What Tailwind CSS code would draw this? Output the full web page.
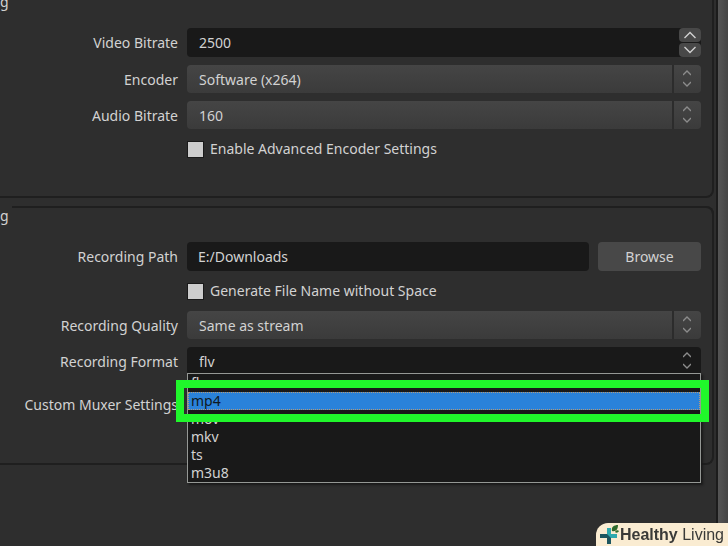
<!DOCTYPE html>
<html lang="en">
<head>
  <meta charset="UTF-8" />
  <meta name="viewport" content="width=device-width, initial-scale=1.0" />
  <title>Output Settings</title>
  <script src="https://cdn.jsdelivr.net/npm/@tailwindcss/browser@4"></script>
</head>
<body class="flex min-h-screen overflow-hidden bg-[#2e2e2e] font-['Noto_Sans',sans-serif] text-sm text-[#d2d2d2]">
  <main class="flex min-w-0 flex-1 flex-col gap-2 pr-[2px]">

    <!-- Streaming -->
    <section class="rounded-br-lg border-r-2 border-b-2 border-[#1f1f1f] pr-[11px] pb-[35px]">
      <h2 class="-mt-2 h-9 leading-5">g</h2>
      <form class="flex flex-col gap-2">
        <div class="flex h-[29px] items-center gap-[9px]">
          <label for="vbitrate" class="w-[178px] text-right">Video Bitrate</label>
          <div class="flex h-full flex-1 rounded bg-[#191919]">
            <input id="vbitrate" type="text" value="2500" class="min-w-0 flex-1 pl-3 outline-none">
            <div class="flex w-[22px] flex-col gap-px">
              <button type="button" aria-label="Increase" class="flex flex-1 items-center justify-center rounded bg-[#484848]">
                <svg class="h-2 w-3" viewBox="0 0 12 8" fill="none" stroke="#d0d0d0" stroke-width="1.4"><path d="M0.5 7l5.5-5.5 5.5 5.5" /></svg>
              </button>
              <button type="button" aria-label="Decrease" class="flex flex-1 items-center justify-center rounded bg-[#484848]">
                <svg class="h-2 w-3" viewBox="0 0 12 8" fill="none" stroke="#d0d0d0" stroke-width="1.4"><path d="M0.5 1l5.5 5.5 5.5-5.5" /></svg>
              </button>
            </div>
          </div>
        </div>
        <div class="flex h-7 items-center gap-[9px]">
          <label for="encoder" class="w-[178px] pt-px text-right">Encoder</label>
          <div class="relative h-full flex-1">
            <select id="encoder" class="h-full w-full appearance-none rounded bg-linear-to-b from-[#454545] to-[#3b3b3b] pt-px pl-3 outline-none"><option>Software (x264)</option></select>
            <span class="pointer-events-none absolute inset-y-0 right-0 flex w-[29px] items-center justify-center border-l-2 border-[#2c2c2c] pr-px">
              <svg class="h-[18px] w-2" viewBox="0 0 8 18" fill="none" stroke="#8c8c8c" stroke-width="1.3"><path d="M0 5l4-4 4 4M0 12l4 4 4-4" /></svg>
            </span>
          </div>
        </div>
        <div class="flex h-7 items-center gap-[9px]">
          <label for="abitrate" class="w-[178px] pt-px text-right">Audio Bitrate</label>
          <div class="relative h-full flex-1">
            <select id="abitrate" class="h-full w-full appearance-none rounded bg-linear-to-b from-[#454545] to-[#3b3b3b] pt-px pl-3 outline-none"><option>160</option></select>
            <span class="pointer-events-none absolute inset-y-0 right-0 flex w-[29px] items-center justify-center border-l-2 border-[#2c2c2c] pr-px">
              <svg class="h-[18px] w-2" viewBox="0 0 8 18" fill="none" stroke="#8c8c8c" stroke-width="1.3"><path d="M0 5l4-4 4 4M0 12l4 4 4-4" /></svg>
            </span>
          </div>
        </div>
        <div class="flex h-6 items-center gap-1.5 pl-[187px]">
          <input id="advanced" type="checkbox" class="size-[17px] appearance-none border border-[#1a1a1a] bg-[#cdcdcd]">
          <label for="advanced">Enable Advanced Encoder Settings</label>
        </div>
      </form>
    </section>

    <!-- Recording -->
    <section class="rounded-r-lg border-r-2 border-b-2 border-[#1f1f1f] pr-[11px] pb-10">
      <div class="-mr-[13px] flex h-9">
        <h2 class="w-3 leading-5">g</h2>
        <div class="h-3 flex-1 rounded-tr-lg border-t-2 border-r-2 border-[#1f1f1f]"></div>
      </div>
      <form class="flex flex-col gap-2">
        <div class="flex h-[29px] items-center gap-[9px]">
          <label for="path" class="w-[178px] text-right">Recording Path</label>
          <input id="path" type="text" value="E:/Downloads" class="h-full min-w-0 flex-1 rounded bg-[#191919] pl-[11px] outline-none">
          <button type="button" class="h-full w-[103px] rounded bg-[#484848]">Browse</button>
        </div>
        <div class="flex h-6 items-center gap-1.5 pl-[187px]">
          <input id="nospace" type="checkbox" class="size-[17px] appearance-none border border-[#1a1a1a] bg-[#cdcdcd]">
          <label for="nospace">Generate File Name without Space</label>
        </div>
        <div class="flex h-7 items-center gap-[9px]">
          <label for="quality" class="w-[178px] pt-px text-right">Recording Quality</label>
          <div class="relative h-full flex-1">
            <select id="quality" class="h-full w-full appearance-none rounded bg-linear-to-b from-[#454545] to-[#3b3b3b] pt-px pl-3 outline-none"><option>Same as stream</option></select>
            <span class="pointer-events-none absolute inset-y-0 right-0 flex w-[29px] items-center justify-center border-l-2 border-[#2c2c2c] pr-px">
              <svg class="h-[18px] w-2" viewBox="0 0 8 18" fill="none" stroke="#8c8c8c" stroke-width="1.3"><path d="M0 5l4-4 4 4M0 12l4 4 4-4" /></svg>
            </span>
          </div>
        </div>
        <div class="flex h-7 items-center gap-[9px]">
          <label for="format" class="w-[178px] pt-px text-right">Recording Format</label>
          <div class="relative h-full flex-1">
            <select id="format" class="h-full w-full appearance-none rounded bg-[#191919] pt-px pl-3 outline-none"><option>flv</option></select>
            <span class="pointer-events-none absolute inset-y-0 right-0 flex w-7 items-center justify-center">
              <svg class="h-[18px] w-2" viewBox="0 0 8 18" fill="none" stroke="#8c8c8c" stroke-width="1.3"><path d="M0 5l4-4 4 4M0 12l4 4 4-4" /></svg>
            </span>
            <!-- open list with the chosen format ringed -->
            <ul role="listbox" aria-label="Recording Format" class="absolute inset-x-0 top-[26px] z-10 border border-[#959895] bg-[#191919] leading-[18px] shadow-[2px_2px_2px_#191919]">
              <li role="option" class="pl-[3px]">flv</li>
              <li role="option" aria-selected="true" class="bg-[#2a82da] pl-[3px] text-[#101820] outline outline-dotted -outline-offset-1 outline-[#b59a78]">mp4</li>
              <li role="option" class="pl-[3px]">mov</li>
              <li role="option" class="pl-[3px]">mkv</li>
              <li role="option" class="pl-[3px]">ts</li>
              <li role="option" class="pl-[3px]">m3u8</li>
            </ul>
            <div class="absolute top-[33px] -right-2 -left-[11px] z-20 h-[42px] border-8 border-[#20f72b]"></div>
          </div>
        </div>
        <div class="mt-1 flex h-9 items-center gap-[9px]">
          <label for="muxer" class="w-[178px] text-right whitespace-nowrap">Custom Muxer Settings</label>
          <input id="muxer" type="text" class="h-7 min-w-0 flex-1 rounded bg-[#191919]">
        </div>
      </form>
    </section>
  </main>

  <!-- scroll bar -->
  <div class="w-3 border-l-2 border-[#1c1c1c] bg-linear-to-r from-[#555555] to-[#444444]"></div>

  <footer class="fixed right-0 bottom-0 z-30 flex h-[23px] items-center rounded-tl-xl bg-[#faecd2] pr-1 pl-1 font-['Liberation_Sans',sans-serif] text-base text-[#3a3a38]">
    <svg class="h-[22px] w-5" viewBox="0 0 20 22">
      <path d="M7 4h4v6h6v4h-6v6H7v-6H0v-4h7z" fill="#2fa9ae" />
      <path d="M0 10h7l4 4v6H7v-6H0z" fill="#1d5660" />
      <path d="M12 7c-1-4 2-6 6-6 0 4-2 7-6 6z" fill="#2f6b2c" />
      <path d="M15 8c1-2 3-2 4-1-1 2-3 2-4 1z" fill="#2f6b2c" />
    </svg>
    <span><b>Healthy</b> Living</span>
  </footer>
</body>
</html>
